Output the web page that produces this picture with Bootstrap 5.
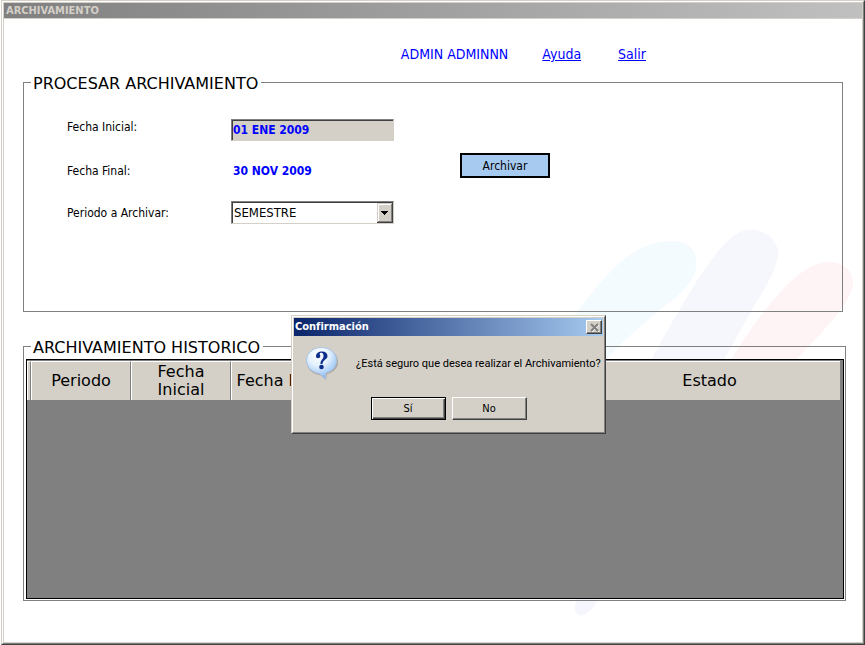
<!DOCTYPE html>
<html lang="es">
<head>
<meta charset="utf-8">
<meta name="viewport" content="width=device-width, initial-scale=1">
<title>Archivamiento</title>
<link href="https://cdn.jsdelivr.net/npm/bootstrap@5.3.0/dist/css/bootstrap.min.css" rel="stylesheet">
<style>
:root { --face: #d4d0c8; --shade: #808080; --dark: #404040; --link: #0000ff; }
body { font-family: Tahoma, "DejaVu Sans Condensed", "DejaVu Sans", sans-serif; font-size: 12px; line-height: 16px; color: #000; background: #fff; }
.win { margin-left: 1px; min-height: 100vh; border: 1px solid; border-color: var(--face) var(--dark) var(--dark) var(--face); }
.win-in { border: 1px solid; border-color: #fff var(--shade) var(--shade) #fff; }
.win-body { border: 1px solid var(--face); }
.win-title { height: 16px; padding-left: 2px; font-size: 11px; line-height: 16px; font-weight: bold; color: var(--face); background: linear-gradient(to right, #808080, #c0c0c0); border-bottom: 1px solid var(--face); }
.top-links { font-size: 14px; line-height: 18px; padding: 26px 216px 7px 19px; gap: 34px; color: var(--link); }
.top-links a { color: var(--link); text-decoration: underline; }
.top-links a + a { margin-left: 3px; }
.content { padding: 0 16px 41px 19px; }
.group { border: 1px solid var(--shade); }
.group legend { float: none; width: auto; margin: 0 0 0 7px; padding: 4px 3px 0 2px; font-family: Verdana, "DejaVu Sans", sans-serif; font-size: 16px; line-height: 20px; white-space: nowrap; }
.group-form { margin: 0 3px 22px 0; min-height: 242px; }
.form-area { padding: 25px 0 0 43px; gap: 66px; }
.fields { display: grid; grid-template-columns: 164px 163px; row-gap: 19px; align-items: center; }
.fields .lbl-top { align-self: start; }
.fld { width: 100%; height: 22px; border: 1px solid; border-color: var(--shade) var(--face) var(--face) var(--shade); border-radius: 0; padding: 0 1px; font-size: 13px; line-height: 16px; color: #000; box-shadow: inset 1px 1px 0 var(--dark); }
.fld-date { font-size: 12px; font-weight: bold; color: var(--link); background: var(--face); }
.fld-plain { background: transparent; border-color: transparent; box-shadow: none; }
.fld-combo { appearance: none; height: 23px; padding: 0 18px 0 2px; background: #fff url("data:image/svg+xml,%3Csvg xmlns='http://www.w3.org/2000/svg' width='16' height='20' shape-rendering='crispEdges'%3E%3Cpath fill='%23404040' d='M0 0h16v20H0z'/%3E%3Cpath fill='%23d4d0c8' d='M0 0h15v19H0z'/%3E%3Cpath fill='%23808080' d='M1 1h14v18H1z'/%3E%3Cpath fill='%23fff' d='M1 1h13v17H1z'/%3E%3Cpath fill='%23d4d0c8' d='M2 2h12v16H2z'/%3E%3Cpath d='M4 8h7v1H4zM5 9h5v1H5zM6 10h3v1H6zM7 11h1v1H7z'/%3E%3C/svg%3E") no-repeat right 0 top 1px; }
.btn-archive { width: 90px; height: 25px; margin-top: 34px; padding: 0; border: 2px solid #000; border-radius: 0; background: #a6caf0; color: #000; font-size: 12px; line-height: 16px; }
.group-hist { padding: 0 1px 1px 2px; }
.group-hist legend { margin-left: 5px; }
.grid-box { min-height: calc(100vh - 405px); margin-top: 1px; border: 1px solid #000; background: var(--shade); padding: 1px 3px 0 0; }
.grid-table { width: 100%; table-layout: fixed; border-collapse: separate; border-spacing: 0; background: var(--face); }
.grid-table th { height: 39px; padding: 0 2px; font-family: Verdana, "DejaVu Sans", sans-serif; font-size: 16px; line-height: 18px; font-weight: normal; text-align: center; vertical-align: middle; border-top: 1px solid #fff; border-left: 1px solid #fff; border-right: 1px solid var(--shade); white-space: nowrap; }
.grid-table th.last-col { border-right: 0; }
.col-sel { width: 4px; }
.col-date { width: 100px; }
.col-mid { width: 247px; }
.wave { right: 7px; top: 224px; width: 284px; height: 395px; z-index: 0; pointer-events: none; }
.dlg { left: 291px; top: 315px; width: 315px; background: var(--face); border: 1px solid; border-color: var(--face) var(--dark) var(--dark) var(--face); z-index: 5; font-size: 11px; line-height: 14px; }
.dlg-in { border: 1px solid; border-color: #fff var(--shade) var(--shade) #fff; padding: 1px 1px 12px; }
.dlg-title { height: 18px; padding: 0 1px; background: linear-gradient(to right, #0a246a, #a6caf0); color: #fff; font-weight: bold; }
.dlg-close { width: 16px; height: 14px; padding: 0; border: 1px solid; border-color: #fff var(--dark) var(--dark) #fff; background: var(--face); box-shadow: inset -1px -1px 0 var(--shade); }
.dlg-msg { padding: 10px 0 0 11px; gap: 17px; white-space: nowrap; }
.dlg-text { font-family: Tahoma, Roboto, sans-serif; }
.dlg-btns { gap: 6px; }
.dlg-btn { width: 75px; height: 23px; padding: 0; border: 1px solid; border-color: #fff var(--dark) var(--dark) #fff; box-shadow: inset -1px -1px 0 var(--shade); background: var(--face); color: #000; border-radius: 0; }
.dlg-btn.is-default { border-color: #000; box-shadow: inset 1px 1px 0 #fff, inset -1px -1px 0 var(--dark), inset -2px -2px 0 var(--shade); }
</style>
</head>
<body>
<div class="win d-flex flex-column position-relative">
  <div class="win-in d-flex flex-column flex-fill">
    <div class="win-body d-flex flex-column flex-fill">
      <header class="win-title">ARCHIVAMIENTO</header>
      <svg class="wave position-absolute" viewBox="573 225 284 395" aria-hidden="true">
        <path fill="#f4fbfe" d="M540 360C578 311 590 293 612 270C632 250 652 240 674 241C692 242 698 254 696 268C694 281 682 293 666 305C638 328 615 348 602 365Z"/>
        <path fill="#f6f7fc" d="M652 359C665 333 681 307 698 279C714 256 724 241 738 233C756 224 776 235 778 252C778 268 766 286 756 303L724 359C690 430 640 540 602 594C594 608 585 618 579 615C571 611 577 598 579 590Z"/>
        <path fill="#fff4f5" d="M731 360C744 338 756 321 770 304C788 283 805 264 827 262C843 261 854 271 853 285C851 299 837 315 824 330L796 360Z"/>
      </svg>
      <nav class="top-links d-flex justify-content-end position-relative">
        <span>ADMIN ADMINNN</span>
        <a href="#ayuda">Ayuda</a>
        <a href="#salir">Salir</a>
      </nav>
      <main class="content d-flex flex-column flex-fill position-relative">
        <fieldset class="group group-form">
          <legend>PROCESAR ARCHIVAMIENTO</legend>
          <div class="form-area d-flex align-items-start">
            <div class="fields">
              <label class="lbl-top" for="fini">Fecha Inicial:</label>
              <input id="fini" class="fld fld-date" type="text" value="01 ENE 2009" readonly>
              <label for="ffin">Fecha Final:</label>
              <input id="ffin" class="fld fld-date fld-plain" type="text" value="30 NOV 2009" readonly>
              <label for="periodo">Periodo a Archivar:</label>
              <select id="periodo" class="fld fld-combo"><option>SEMESTRE</option></select>
            </div>
            <button type="button" class="btn btn-archive">Archivar</button>
          </div>
        </fieldset>
        <fieldset class="group group-hist flex-fill">
          <legend>ARCHIVAMIENTO HISTORICO</legend>
          <div class="grid-box">
            <table class="grid-table">
              <colgroup><col class="col-sel"><col class="col-date"><col class="col-date"><col class="col-date"><col class="col-mid"><col></colgroup>
              <thead>
                <tr><th class="p-0"></th><th>Periodo</th><th>Fecha<br>Inicial</th><th>Fecha Final</th><th></th><th class="last-col">Estado</th></tr>
              </thead>
            </table>
          </div>
        </fieldset>
      </main>
    </div>
  </div>
</div>
<div class="dlg position-absolute" role="dialog" aria-labelledby="dlg-title">
  <div class="dlg-in">
    <div class="dlg-title d-flex align-items-center justify-content-between">
      <span id="dlg-title">Confirmación</span>
      <button type="button" class="dlg-close d-flex align-items-center justify-content-center" aria-label="Cerrar">
        <svg width="9" height="9" viewBox="0 0 9 9"><path d="M2 2L9 9M9 2L2 9" stroke="#fff" stroke-width="1"/><path d="M1 1L8 8M8 1L1 8" stroke="#808080" stroke-width="2"/></svg>
      </button>
    </div>
    <div class="dlg-msg d-flex align-items-center">
      <svg width="34" height="35" viewBox="0 0 34 35" aria-hidden="true">
        <defs><radialGradient id="bub" cx="40%" cy="22%" r="80%"><stop offset="0" stop-color="#fff"/><stop offset=".45" stop-color="#e4f1fd"/><stop offset=".8" stop-color="#a9cdf6"/><stop offset="1" stop-color="#6f9fdc"/></radialGradient></defs>
        <path d="M17 3C26 3 33 8 33 16C33 22 29 26 22 28L21 34L15 29C7 28 2 23 2 16C2 8 9 3 17 3Z" fill="#9a968f" opacity=".7"/>
        <path d="M16.500 1.500C25 1.500 31.500 7 31.500 14.500C31.500 21 27 25.500 20.500 27L20.500 33L14.500 27.500C7 26.500 1.500 21.500 1.500 14.500C1.500 7 8 1.500 16.500 1.500Z" fill="url(#bub)" stroke="#a8c3e4" stroke-width="1"/>
        <path d="M11 10.500C11 7 13.500 5.500 17 5.500C20.500 5.500 22.500 7.300 22.500 10C22.500 13.500 17.500 14 17.500 18H15.500C15.200 14 18.500 13.500 18.500 10C18.500 8 17.700 6.800 16.300 6.800C15.200 6.800 14.700 7.300 14.700 8C14.700 9 15.300 9 15.300 10.500C15.300 12.500 11 13 11 10.500Z" fill="#0c2f8c"/>
        <circle cx="16.500" cy="21" r="2.300" fill="#0c2f8c"/>
      </svg>
      <span class="dlg-text">¿Está seguro que desea realizar el Archivamiento?</span>
    </div>
    <div class="dlg-btns d-flex justify-content-center pt-3">
      <button type="button" class="dlg-btn is-default">Sí</button>
      <button type="button" class="dlg-btn">No</button>
    </div>
  </div>
</div>
<script src="https://cdn.jsdelivr.net/npm/bootstrap@5.3.0/dist/js/bootstrap.bundle.min.js"></script>
</body>
</html>
